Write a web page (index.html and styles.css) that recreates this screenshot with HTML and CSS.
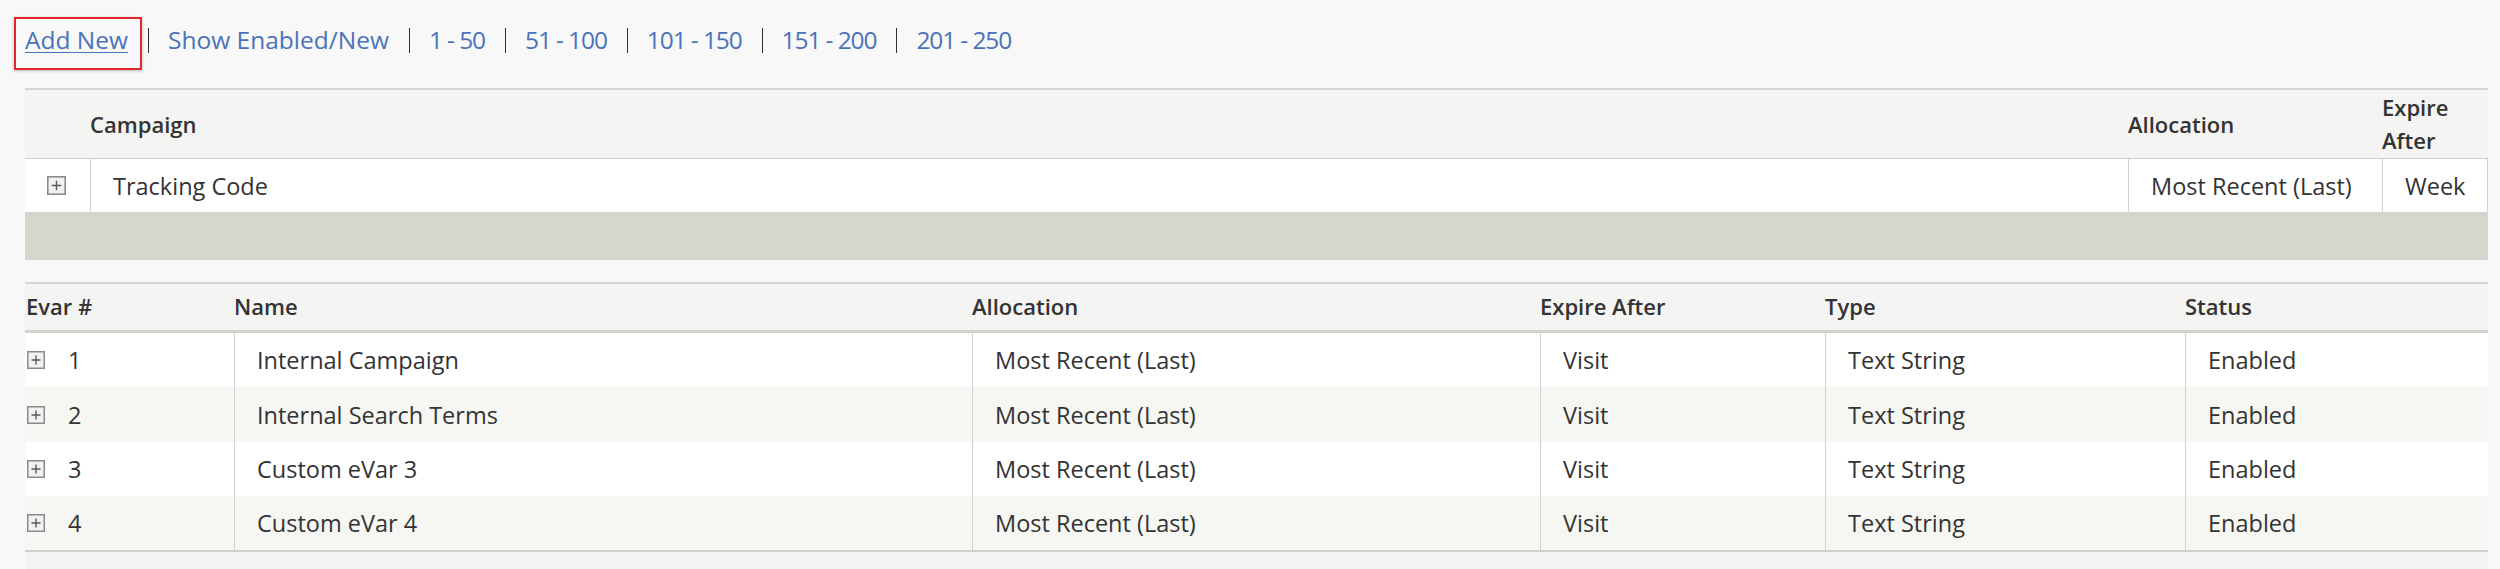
FILE: index.html
```html
<!DOCTYPE html>
<html>
<head>
<meta charset="utf-8">
<link rel="stylesheet" href="styles.css">
</head>
<body>
<div class="page">
  <nav class="nav">
    <a class="link link-add" href="#">Add New</a>
    <span class="sep"></span>
    <a class="link" href="#">Show Enabled/New</a>
    <span class="sep"></span>
    <a class="link range" href="#">1 - 50</a>
    <span class="sep"></span>
    <a class="link range" href="#">51 - 100</a>
    <span class="sep"></span>
    <a class="link range" href="#">101 - 150</a>
    <span class="sep"></span>
    <a class="link range" href="#">151 - 200</a>
    <span class="sep"></span>
    <a class="link range" href="#">201 - 250</a>
  </nav>

  <table class="grid campaign">
    <colgroup>
      <col class="c-icon"><col class="c-campaign"><col class="c-alloc"><col class="c-expire">
    </colgroup>
    <thead>
      <tr><th></th><th>Campaign</th><th>Allocation</th><th>Expire After</th></tr>
    </thead>
    <tbody>
      <tr class="row">
        <td class="icon-cell"><svg class="plus" viewBox="0 0 18 18"><rect x="0.75" y="0.75" width="16.5" height="16.5" fill="#f1f1f1" stroke="#8a8a8a" stroke-width="1.5"/><path d="M9 4.5v9M4.5 9h9" stroke="#5a5a5a" stroke-width="1.4"/></svg></td>
        <td>Tracking Code</td>
        <td>Most Recent (Last)</td>
        <td>Week</td>
      </tr>
      <tr class="band"><td colspan="4"></td></tr>
    </tbody>
  </table>

  <div class="evar-wrap">
    <table class="grid evars">
      <colgroup>
        <col class="e-num"><col class="e-name"><col class="e-alloc"><col class="e-expire"><col class="e-type"><col class="e-status">
      </colgroup>
      <thead>
        <tr><th>Evar #</th><th>Name</th><th>Allocation</th><th>Expire After</th><th>Type</th><th>Status</th></tr>
      </thead>
      <tbody>
        <tr>
          <td class="num-cell"><span class="num"><svg class="plus" viewBox="0 0 18 18"><rect x="0.75" y="0.75" width="16.5" height="16.5" fill="#f1f1f1" stroke="#8a8a8a" stroke-width="1.5"/><path d="M9 4.5v9M4.5 9h9" stroke="#5a5a5a" stroke-width="1.4"/></svg><span>1</span></span></td>
          <td>Internal Campaign</td><td>Most Recent (Last)</td><td>Visit</td><td>Text String</td><td>Enabled</td>
        </tr>
        <tr>
          <td class="num-cell"><span class="num"><svg class="plus" viewBox="0 0 18 18"><rect x="0.75" y="0.75" width="16.5" height="16.5" fill="#f1f1f1" stroke="#8a8a8a" stroke-width="1.5"/><path d="M9 4.5v9M4.5 9h9" stroke="#5a5a5a" stroke-width="1.4"/></svg><span>2</span></span></td>
          <td>Internal Search Terms</td><td>Most Recent (Last)</td><td>Visit</td><td>Text String</td><td>Enabled</td>
        </tr>
        <tr>
          <td class="num-cell"><span class="num"><svg class="plus" viewBox="0 0 18 18"><rect x="0.75" y="0.75" width="16.5" height="16.5" fill="#f1f1f1" stroke="#8a8a8a" stroke-width="1.5"/><path d="M9 4.5v9M4.5 9h9" stroke="#5a5a5a" stroke-width="1.4"/></svg><span>3</span></span></td>
          <td>Custom eVar 3</td><td>Most Recent (Last)</td><td>Visit</td><td>Text String</td><td>Enabled</td>
        </tr>
        <tr>
          <td class="num-cell"><span class="num"><svg class="plus" viewBox="0 0 18 18"><rect x="0.75" y="0.75" width="16.5" height="16.5" fill="#f1f1f1" stroke="#8a8a8a" stroke-width="1.5"/><path d="M9 4.5v9M4.5 9h9" stroke="#5a5a5a" stroke-width="1.4"/></svg><span>4</span></span></td>
          <td>Custom eVar 4</td><td>Most Recent (Last)</td><td>Visit</td><td>Text String</td><td>Enabled</td>
        </tr>
      </tbody>
    </table>
  </div>
</div>
</body>
</html>
```

FILE: styles.css
```css
html, body {
  margin: 0;
  padding: 0;
  background: #f8f8f8;
}

body {
  font-family: "Open Sans", "Noto Sans", sans-serif;
  color: #333333;
  font-size: 23.5px;
}

.page {
  padding: 0 12px 0 25px;
}

/* top navigation */
.nav {
  display: flex;
  align-items: center;
  padding-top: 24px;
  height: 32px;
  margin-bottom: 32px;
  line-height: 32px;
  font-size: 24.5px;
}

.link {
  color: #4b73ba;
  text-decoration: none;
  white-space: nowrap;
}

.range {
  letter-spacing: -1.1px;
}

.link-add {
  position: relative;
  text-decoration: underline;
  text-underline-offset: 3px;
  text-decoration-thickness: 1px;
}

.link-add::after {
  content: "";
  position: absolute;
  left: -11px;
  right: -14px;
  top: -7px;
  bottom: -14px;
  border: 2px solid #e0262a;
  box-shadow: 0 1px 3px rgba(0, 0, 0, 0.25);
}

.sep {
  display: block;
  width: 1px;
  height: 25px;
  background: #2f2f2f;
  margin: 0 19px 0 20px;
}

/* tables */
.grid {
  border-collapse: separate;
  border-spacing: 0;
  table-layout: fixed;
  width: 2463px;
}

.grid th {
  text-align: left;
  font-weight: 600;
  font-size: 22px;
  line-height: 33px;
  padding: 0;
  background: #f4f4f2;
  color: #333333;
  vertical-align: middle;
}

.grid td {
  padding: 0 0 0 22px;
  white-space: nowrap;
  vertical-align: middle;
}

/* campaign table */
.campaign {
  border-top: 2px solid #d5d5d5;
}

.c-icon { width: 65px; }
.c-campaign { width: 2038px; }
.c-alloc { width: 254px; }
.c-expire { width: 106px; }

.campaign thead tr {
  height: 68px;
}

.campaign .row {
  height: 55px;
}

.campaign .row td {
  background: #ffffff;
  border-top: 1px solid #cacaca;
  border-bottom: 1px solid #d0d0cb;
  border-left: 1px solid #d2d2d2;
}

.campaign .row td:first-child {
  border-left: none;
}

.campaign .row td:last-child {
  border-right: 1px solid #d2d2d2;
}

.campaign .icon-cell {
  padding: 0;
  text-align: center;
}

.plus {
  display: block;
  width: 18px;
  height: 18px;
}

.campaign .icon-cell .plus {
  margin: 0 auto;
  position: relative;
  left: -1px;
  width: 19px;
  height: 19px;
}

.band {
  height: 47px;
}

.band td {
  background: #d6d6cf;
  padding: 0;
}

/* evar table */
.evar-wrap {
  margin-top: 22px;
  background: #f3f3f2;
  padding-bottom: 40px;
}

.evars {
  border-top: 2px solid #d4d4d4;
  border-bottom: 2px solid #cfcfcf;
}

.e-num { width: 209px; }
.e-name { width: 738px; }
.e-alloc { width: 568px; }
.e-expire { width: 285px; }
.e-type { width: 360px; }
.e-status { width: 303px; }

.evars thead tr {
  height: 49px;
}

.evars thead th {
  padding-bottom: 2px;
  border-bottom: 3px solid #d3d3ce;
}

.evars thead th:first-child {
  padding-left: 1px;
}

.evars tbody tr {
  height: 54px;
}

.evars tbody tr:nth-child(2) {
  height: 55px;
}

.evars td {
  background: #ffffff;
  border-left: 1px solid #d2d2d2;
}

.evars tbody tr:nth-child(even) td {
  background: #f6f6f3;
}

.evars td:first-child {
  border-left: none;
}

.evars .num-cell {
  padding-left: 2px;
}

.num {
  display: flex;
  align-items: center;
  gap: 23px;
}
```
